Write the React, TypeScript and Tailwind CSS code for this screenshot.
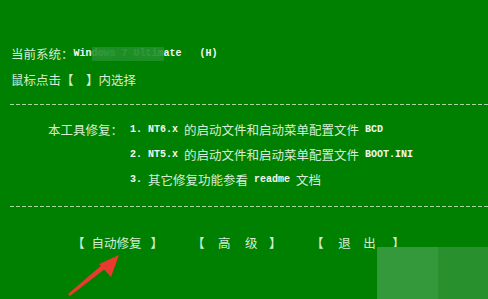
import React from "react";

const cjk = "font-['Noto_Sans_CJK_SC',sans-serif] text-[12.5px] text-[#d6eed6]";
const mono = "font-['Liberation_Mono',monospace] text-[10px] font-bold text-[#f2f8f2]";

function Dash() {
  return (
    <div className="ml-[10px] h-px w-[478px] bg-[repeating-linear-gradient(90deg,#a8d8a0_0_4px,transparent_4px_6px)]" />
  );
}

export default function App() {
  return (
    <div className="relative h-[299px] w-[488px] overflow-hidden bg-[#008000] leading-[16px]">
      <div className="flex flex-col pt-[46px]">
        <div className="relative flex items-center whitespace-pre pl-[11px]">
          <span className={cjk}>当前系统：</span>
          <span className={mono}>{"Windows 7 Ultimate   (H)"}</span>
          <div className="absolute left-[92px] top-[1px] h-[14px] w-[72px] bg-[#1f8f2a]/80 backdrop-blur-sm" />
        </div>
        <div className={`mt-[10px] pl-[11px] ${cjk}`}>鼠标点击【　】内选择</div>
        <div className="mt-[16px]">
          <Dash />
        </div>
        <div className="mt-[17px] flex items-center whitespace-pre">
          <span className={`w-[130px] pl-[48px] ${cjk}`}>本工具修复：</span>
          <span className={mono}>{"1. NT6.x "}</span>
          <span className={cjk}>的启动文件和启动菜单配置文件</span>
          <span className={mono}>{" BCD"}</span>
        </div>
        <div className="mt-[9px] flex items-center whitespace-pre pl-[130px]">
          <span className={mono}>{"2. NT5.x "}</span>
          <span className={cjk}>的启动文件和启动菜单配置文件</span>
          <span className={mono}>{" BOOT.INI"}</span>
        </div>
        <div className="mt-[9px] flex items-center whitespace-pre pl-[130px]">
          <span className={mono}>{"3. "}</span>
          <span className={cjk}>其它修复功能参看</span>
          <span className={mono}>{" readme "}</span>
          <span className={cjk}>文档</span>
        </div>
        <div className="mt-[18px]">
          <Dash />
        </div>
        <div className={`mt-[28px] flex items-center ${cjk}`}>
          <div className="flex items-center pl-[72px]">
            <span>【</span>
            <span className="ml-[7px]">自动修复</span>
            <span className="ml-[9px]">】</span>
          </div>
          <div className="ml-[29px] flex items-center">
            <span>【</span>
            <span className="ml-[13.5px]">高</span>
            <span className="ml-[14.5px]">级</span>
            <span className="ml-[11.5px]">】</span>
          </div>
          <div className="ml-[29.5px] flex items-center">
            <span>【</span>
            <span className="ml-[14.5px]">退</span>
            <span className="ml-[12.5px]">出</span>
            <span className="ml-[16.5px]">】</span>
          </div>
        </div>
      </div>

      <div className="absolute left-[377px] top-[247px] flex h-[52px] w-[111px]">
        <div className="h-full w-[61px] bg-[#33993a]" />
        <div className="h-full flex-1 bg-[#28912d]" />
      </div>

      <svg className="absolute left-0 top-0" width="488" height="299" viewBox="0 0 488 299">
        <polygon points="68,294 70,296 106,268 103,264" fill="#e83a2e" />
        <polygon points="119,255 99,264 111,277" fill="#e83a2e" />
      </svg>
    </div>
  );
}
